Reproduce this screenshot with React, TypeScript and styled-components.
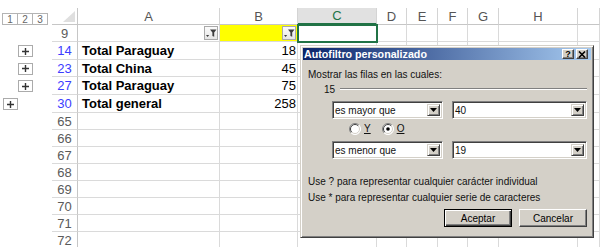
import React from 'react';
import styled, { createGlobalStyle, css } from 'styled-components';

const GlobalStyle = createGlobalStyle`
  html, body { margin: 0; padding: 0; background: #fff; overflow: hidden; }
  body { font-family: "Liberation Sans", Arial, sans-serif; }
`;

const TEMPLATE = '52px 26px 142px 78px 79px 30px 31px 30px 31px 79px 22px';
const GRID = '#dadada';

const Stage = styled.div`
  position: relative;
  width: 600px;
  height: 247px;
  overflow: hidden;
  background: #fff;
  padding-top: 8px;
  box-sizing: border-box;
  font-family: "Liberation Sans", Arial, sans-serif;
`;

const Row = styled.div<{ $h: number }>`
  display: grid;
  grid-template-columns: ${TEMPLATE};
  height: ${(p) => p.$h}px;
`;

const OutlineCell = styled.div<{ $indent?: number; $bottom?: boolean }>`
  display: flex;
  align-items: ${(p) => (p.$bottom ? 'flex-end' : 'center')};
  padding-left: ${(p) => p.$indent ?? 0}px;
`;

const Levels = styled.div`
  display: flex;
  margin-bottom: 0;
`;

const LevelBtn = styled.div`
  width: 16px;
  height: 12px;
  box-sizing: border-box;
  border: 1px solid #b4b4b4;
  margin-right: -1px;
  font-size: 10px;
  color: #666;
  background: #fff;
  display: flex;
  align-items: center;
  justify-content: center;
`;

const PlusBox = styled.div`
  width: 15px;
  height: 12px;
  box-sizing: border-box;
  border: 1px solid #ababab;
  background: #fff;
  display: flex;
  align-items: center;
  justify-content: center;
`;

const Corner = styled.div`
  box-sizing: border-box;
  border-right: 1px solid #c6c6c6;
  border-bottom: 1px solid #c6c6c6;
  display: flex;
  align-items: flex-end;
  justify-content: flex-end;
  padding: 0 2px 2px 0;
`;

const ColHeader = styled.div<{ $sel?: boolean }>`
  box-sizing: border-box;
  border-right: 1px solid #d4d4d4;
  border-bottom: ${(p) => (p.$sel ? '2px solid #217346' : '1px solid #c6c6c6')};
  background: ${(p) => (p.$sel ? '#e1e1e1' : '#fff')};
  color: ${(p) => (p.$sel ? '#217346' : '#555')};
  font-size: 13px;
  display: flex;
  align-items: center;
  justify-content: center;
`;

const RowNum = styled.div<{ $blue?: boolean }>`
  box-sizing: border-box;
  border-right: 1px solid #c6c6c6;
  border-bottom: 1px solid ${GRID};
  font-size: 13px;
  color: ${(p) => (p.$blue ? '#3c3cff' : '#5a5a5a')};
  display: flex;
  align-items: center;
  justify-content: center;
`;

const Cell = styled.div<{ $bold?: boolean; $right?: boolean; $fill?: string; $sel?: boolean }>`
  position: relative;
  box-sizing: border-box;
  border-right: 1px solid ${GRID};
  border-bottom: 1px solid ${GRID};
  background: ${(p) => p.$fill || 'transparent'};
  font-size: 13px;
  font-weight: ${(p) => (p.$bold ? 700 : 400)};
  color: #000;
  display: flex;
  align-items: center;
  justify-content: ${(p) => (p.$right ? 'flex-end' : 'flex-start')};
  padding: 0 ${(p) => (p.$right ? 1 : 4)}px 0 4px;
  white-space: nowrap;
  ${(p) =>
    p.$sel &&
    css`
      outline: 2px solid #217346;
      outline-offset: -1px;
      z-index: 1;
    `}
`;

const FilterBtn = styled.span`
  width: 14px;
  height: 14px;
  box-sizing: border-box;
  border: 1px solid #a9a9a9;
  background: linear-gradient(#fbfbfb, #e6e6e6);
  display: flex;
  align-items: center;
  justify-content: center;
`;

/* ---------- dialog ---------- */

const Dialog = styled.div`
  position: absolute;
  left: 300px;
  top: 45px;
  width: 294px;
  height: 193px;
  box-sizing: border-box;
  background: #d4d0c8;
  border: 1px solid;
  border-color: #d4d0c8 #404040 #404040 #d4d0c8;
  box-shadow: inset 1px 1px 0 #fff, inset -1px -1px 0 #808080;
  padding: 2px;
  display: flex;
  flex-direction: column;
  font-family: "Liberation Sans", Arial, sans-serif;
  font-size: 10px;
  color: #111;
  z-index: 5;
`;

const TitleBar = styled.div`
  height: 12px;
  flex: none;
  background: linear-gradient(to right, #0a246a, #a6caf0);
  display: flex;
  align-items: center;
  padding: 0 3px 0 1px;
  color: #fff;
  font-weight: 700;
  font-size: 10.7px;
`;

const TitleText = styled.span`
  flex: 1;
  line-height: 12px;
  white-space: nowrap;
`;

const TitleBtn = styled.span<{ $gap?: number }>`
  width: 12px;
  height: 10px;
  box-sizing: border-box;
  margin-left: ${(p) => p.$gap ?? 0}px;
  background: #d4d0c8;
  border: 1px solid;
  border-color: #fff #404040 #404040 #fff;
  box-shadow: inset -1px -1px 0 #808080;
  color: #000;
  font-size: 9px;
  font-weight: 700;
  line-height: 8px;
  display: flex;
  align-items: center;
  justify-content: center;
`;

const Body = styled.div`
  flex: 1;
  display: flex;
  flex-direction: column;
  padding: 9px 4px 0 5px;
`;

const Label = styled.div`
  line-height: 12px;
  height: 12px;
  white-space: nowrap;
`;

const GroupLine = styled.div`
  display: flex;
  align-items: center;
  height: 12px;
  margin-top: 2px;
  padding-left: 16px;
`;

const Rule = styled.div`
  flex: 1;
  margin-left: 5px;
  height: 0;
  border-top: 1px solid #808080;
  border-bottom: 1px solid #fff;
`;

const ComboRow = styled.div<{ $mt: number }>`
  display: flex;
  gap: 9px;
  margin-top: ${(p) => p.$mt}px;
  padding-left: 24px;
`;

const Combo = styled.div<{ $w: number }>`
  width: ${(p) => p.$w}px;
  height: 18px;
  box-sizing: border-box;
  background: #fff;
  border: 1px solid;
  border-color: #808080 #fff #fff #808080;
  box-shadow: inset 1px 1px 0 #404040, inset -1px -1px 0 #d4d0c8;
  display: flex;
  align-items: stretch;
  padding: 2px;
`;

const ComboText = styled.span`
  flex: 1;
  display: flex;
  align-items: center;
  white-space: nowrap;
`;

const DropBtn = styled.span`
  width: 13px;
  box-sizing: border-box;
  background: #d4d0c8;
  border: 1px solid;
  border-color: #d4d0c8 #404040 #404040 #d4d0c8;
  box-shadow: inset 1px 1px 0 #fff, inset -1px -1px 0 #808080;
  display: flex;
  align-items: center;
  justify-content: center;
`;

const RadioRow = styled.div`
  display: flex;
  align-items: center;
  height: 12px;
  margin-top: 4px;
  padding-left: 41px;
`;

const RadioLabel = styled.span<{ $gap: number }>`
  margin-left: 3px;
  margin-right: ${(p) => p.$gap}px;
  text-decoration: underline;
  line-height: 12px;
`;

const Hints = styled.div`
  margin-top: 15px;
  line-height: 16px;
  white-space: nowrap;
`;

const Buttons = styled.div`
  display: flex;
  justify-content: flex-end;
  gap: 7px;
  margin-top: 3px;
`;

const Button = styled.button<{ $default?: boolean }>`
  width: 68px;
  height: 18px;
  box-sizing: border-box;
  padding: 0;
  background: #d4d0c8;
  font-family: "Liberation Sans", Arial, sans-serif;
  font-size: 10px;
  color: #000;
  border: 1px solid;
  border-color: #fff #404040 #404040 #fff;
  box-shadow: inset -1px -1px 0 #808080;
  ${(p) =>
    p.$default &&
    css`
      border: 1px solid #000;
      box-shadow: inset 1px 1px 0 #fff, inset -1px -1px 0 #404040, inset -2px -2px 0 #808080;
    `}
`;

/* ---------- icons ---------- */

const FunnelIcon = () => (
  <svg width="12" height="12" viewBox="0 0 12 12">
    <path d="M5 2.5h6.5L9.2 5.6v4.2L7.4 8.9V5.6z" fill="#3d3d3d" />
    <path d="M1 8h3.2L2.6 10z" fill="#3d3d3d" />
  </svg>
);

const PlusIcon = () => (
  <svg width="9" height="9" viewBox="0 0 9 9">
    <path d="M4.5 1v7M1 4.5h7" stroke="#333" strokeWidth="1.4" />
  </svg>
);

const CornerTriangle = () => (
  <svg width="12" height="11" viewBox="0 0 12 11">
    <path d="M12 0V11H0z" fill="#dfdfdf" />
  </svg>
);

const DownArrow = () => (
  <svg width="7" height="4" viewBox="0 0 7 4">
    <path d="M0 0h7L3.5 4z" fill="#000" />
  </svg>
);

const CloseIcon = () => (
  <svg width="8" height="7" viewBox="0 0 8 7">
    <path d="M1 0.5l6 6M7 0.5l-6 6" stroke="#000" strokeWidth="1.6" />
  </svg>
);

const Radio = ({ checked }: { checked?: boolean }) => (
  <svg width="12" height="12" viewBox="0 0 12 12">
    <circle cx="6" cy="6" r="5.5" fill="#fff" />
    <path d="M2.1 9.9A5.5 5.5 0 0 1 9.9 2.1" stroke="#808080" fill="none" />
    <path d="M9.9 2.1A5.5 5.5 0 0 1 2.1 9.9" stroke="#fff" fill="none" />
    <path d="M2.8 9.2A4.5 4.5 0 0 1 9.2 2.8" stroke="#404040" fill="none" />
    <path d="M9.2 2.8A4.5 4.5 0 0 1 2.8 9.2" stroke="#d4d0c8" fill="none" />
    {checked && <circle cx="6" cy="6" r="1.8" fill="#000" />}
  </svg>
);

/* ---------- data ---------- */

type SheetRowData = {
  n: string;
  h: number;
  blue?: boolean;
  plus?: number;
  a?: string;
  b?: string;
  filter?: boolean;
};

const ROWS: SheetRowData[] = [
  { n: '9', h: 17, filter: true },
  { n: '14', h: 18, blue: true, plus: 18, a: 'Total Paraguay', b: '18' },
  { n: '23', h: 17, blue: true, plus: 18, a: 'Total China', b: '45' },
  { n: '27', h: 18, blue: true, plus: 18, a: 'Total Paraguay', b: '75' },
  { n: '30', h: 18, blue: true, plus: 3, a: 'Total general', b: '258' },
  { n: '65', h: 17 },
  { n: '66', h: 17 },
  { n: '67', h: 17 },
  { n: '68', h: 17 },
  { n: '69', h: 17 },
  { n: '70', h: 17 },
  { n: '71', h: 17 },
  { n: '72', h: 17 },
];

const HEADERS = ['A', 'B', 'C', 'D', 'E', 'F', 'G', 'H', ''];
const REST = ['D', 'E', 'F', 'G', 'H', 'I'];

const SheetRow = ({ r }: { r: SheetRowData }) => (
  <Row $h={r.h}>
    <OutlineCell $indent={r.plus}>
      {r.plus !== undefined && (
        <PlusBox>
          <PlusIcon />
        </PlusBox>
      )}
    </OutlineCell>
    <RowNum $blue={r.blue}>{r.n}</RowNum>
    <Cell $bold $right={r.filter}>
      {r.a}
      {r.filter && (
        <FilterBtn>
          <FunnelIcon />
        </FilterBtn>
      )}
    </Cell>
    <Cell $right $fill={r.filter ? '#ffff00' : undefined}>
      {r.b}
      {r.filter && (
        <FilterBtn>
          <FunnelIcon />
        </FilterBtn>
      )}
    </Cell>
    <Cell $sel={r.filter} />
    {REST.map((k) => (
      <Cell key={k} />
    ))}
  </Row>
);

export default function App() {
  return (
    <>
      <GlobalStyle />
      <Stage>
        <Row $h={17}>
          <OutlineCell $indent={2} $bottom>
            <Levels>
              <LevelBtn>1</LevelBtn>
              <LevelBtn>2</LevelBtn>
              <LevelBtn>3</LevelBtn>
            </Levels>
          </OutlineCell>
          <Corner>
            <CornerTriangle />
          </Corner>
          {HEADERS.map((h, i) => (
            <ColHeader key={i} $sel={h === 'C'}>
              {h}
            </ColHeader>
          ))}
        </Row>
        {ROWS.map((r) => (
          <SheetRow key={r.n} r={r} />
        ))}

        <Dialog>
          <TitleBar>
            <TitleText>Autofiltro personalizado</TitleText>
            <TitleBtn>?</TitleBtn>
            <TitleBtn $gap={2}>
              <CloseIcon />
            </TitleBtn>
          </TitleBar>
          <Body>
            <Label>Mostrar las filas en las cuales:</Label>
            <GroupLine>
              <span>15</span>
              <Rule />
            </GroupLine>
            <ComboRow $mt={6}>
              <Combo $w={111}>
                <ComboText>es mayor que</ComboText>
                <DropBtn>
                  <DownArrow />
                </DropBtn>
              </Combo>
              <Combo $w={135}>
                <ComboText>40</ComboText>
                <DropBtn>
                  <DownArrow />
                </DropBtn>
              </Combo>
            </ComboRow>
            <RadioRow>
              <Radio />
              <RadioLabel $gap={11}>Y</RadioLabel>
              <Radio checked />
              <RadioLabel $gap={0}>O</RadioLabel>
            </RadioRow>
            <ComboRow $mt={6}>
              <Combo $w={111}>
                <ComboText>es menor que</ComboText>
                <DropBtn>
                  <DownArrow />
                </DropBtn>
              </Combo>
              <Combo $w={135}>
                <ComboText>19</ComboText>
                <DropBtn>
                  <DownArrow />
                </DropBtn>
              </Combo>
            </ComboRow>
            <Hints>
              <div>Use ? para representar cualquier carácter individual</div>
              <div>Use * para representar cualquier serie de caracteres</div>
            </Hints>
            <Buttons>
              <Button $default>Aceptar</Button>
              <Button>Cancelar</Button>
            </Buttons>
          </Body>
        </Dialog>
      </Stage>
    </>
  );
}
